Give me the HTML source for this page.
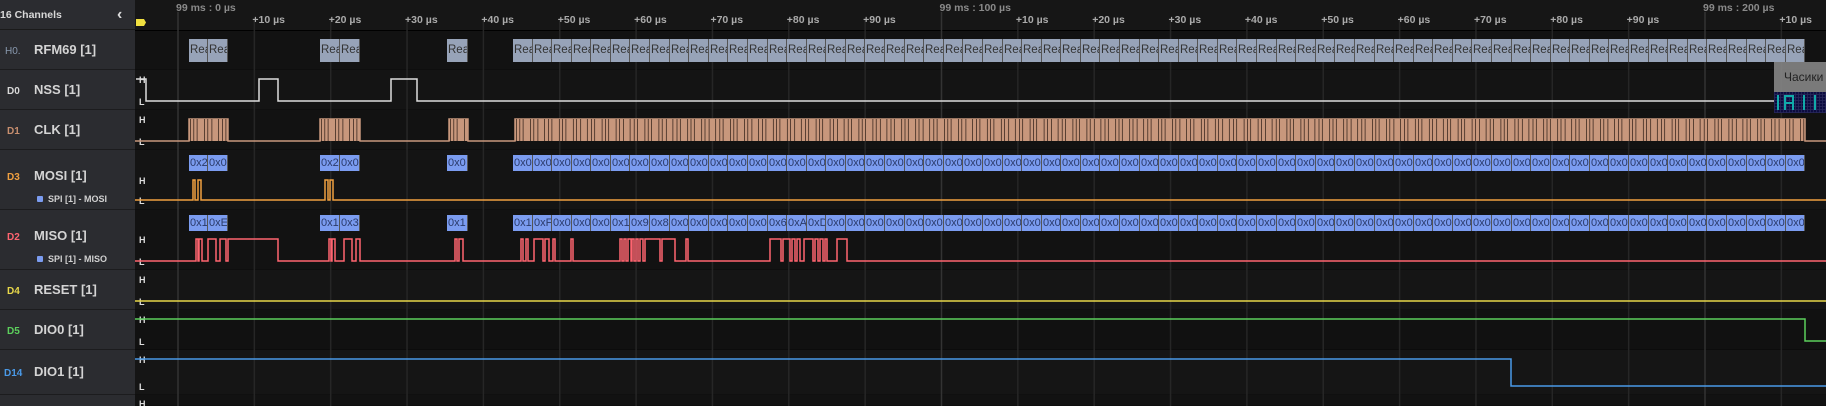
<!DOCTYPE html>
<html><head><meta charset="utf-8"><style>
*{margin:0;padding:0;box-sizing:border-box}
body{width:1826px;height:406px;overflow:hidden;background:#121212;font-family:"Liberation Sans","Noto Sans CJK SC",sans-serif;position:relative}
#side{position:absolute;left:0;top:0;width:135px;height:406px;background:#2b2c30}
.hdr{position:absolute;left:0;top:0;width:135px;height:30px;background:#2b2c30;border-bottom:1px solid #1a1a1a;color:#d8d8d8;font-size:10.5px;font-weight:bold;line-height:30px}
.row{position:absolute;left:0;width:135px;border-bottom:1px solid #1c1c1e}
.id{position:absolute;left:7px;font-size:10px;font-weight:bold}
.nm{position:absolute;left:34px;font-size:13px;font-weight:bold;color:#d4d4d4}
.sub{position:absolute;left:37px;font-size:9px;color:#d0d0d0;font-weight:bold}
.sub i{display:inline-block;width:6px;height:6px;background:#7b9cf0;border-radius:1px;margin-right:5px;vertical-align:0}
.blk{position:absolute;overflow:hidden;white-space:nowrap;font-size:11px;line-height:17px;padding-left:1px;border-right:1px solid #555}
.g{background:#97a3b8;color:#333;height:23px;line-height:23px;font-size:11.5px}
.b{background:#7b9cf0;color:#2a3a6a;height:16px;line-height:16px}
.tk{position:absolute;top:14px;font-size:10.5px;font-weight:bold;color:#aaa}
.mj{position:absolute;top:2px;font-size:10.5px;font-weight:bold;color:#8a8a8a}
</style></head><body>
<div id="side">
<div class="hdr">16 Channels<span style="position:absolute;left:117px;top:0;font-size:16px;color:#ddd">&#8249;</span></div>
<div class="row" style="top:30px;height:40px"><span class="id" style="top:16px;left:5px;color:#8a9ab0;font-weight:normal">H0.</span><span class="nm" style="top:12px">RFM69 [1]</span></div>
<div class="row" style="top:70px;height:40px"><span class="id" style="top:16px;color:#d8d8d8">D0</span><span class="nm" style="top:12px">NSS [1]</span></div>
<div class="row" style="top:110px;height:40px"><span class="id" style="top:16px;color:#c88f6f">D1</span><span class="nm" style="top:12px">CLK [1]</span></div>
<div class="row" style="top:150px;height:60px"><span class="id" style="top:22px;color:#f0a040">D3</span><span class="nm" style="top:18px">MOSI [1]</span><span class="sub" style="top:44px"><i></i>SPI [1] - MOSI</span></div>
<div class="row" style="top:210px;height:60px"><span class="id" style="top:22px;color:#ff6470">D2</span><span class="nm" style="top:18px">MISO [1]</span><span class="sub" style="top:44px"><i></i>SPI [1] - MISO</span></div>
<div class="row" style="top:270px;height:40px"><span class="id" style="top:16px;color:#e8d84a">D4</span><span class="nm" style="top:12px">RESET [1]</span></div>
<div class="row" style="top:310px;height:40px"><span class="id" style="top:16px;color:#5cd05c">D5</span><span class="nm" style="top:12px">DIO0 [1]</span></div>
<div class="row" style="top:350px;height:45px"><span class="id" style="top:18px;left:4px;color:#4a9ae8">D14</span><span class="nm" style="top:14px">DIO1 [1]</span></div>
</div>
<svg id="sv" style="position:absolute;left:0;top:0" width="1826" height="406"></svg>
<div id="ov"></div>
<div style="position:absolute;left:1774px;top:62px;width:52px;height:30px;background:rgba(140,140,140,0.85);color:#222;font-size:12px;padding:8px 0 0 10px">Часики</div>
<div style="position:absolute;left:1774px;top:92px;width:52px;height:21px;background:#0c0c40;background-image:linear-gradient(90deg,rgba(40,40,90,.8) 1px,transparent 1px),linear-gradient(0deg,rgba(40,40,90,.8) 1px,transparent 1px);background-size:3px 3px">
<div style="position:absolute;left:3px;top:3px;width:2px;height:15px;background:#1aa"></div>
<div style="position:absolute;left:10px;top:3px;width:2px;height:15px;background:#1aa"></div>
<div style="position:absolute;left:10px;top:3px;width:9px;height:2px;background:#1aa"></div>
<div style="position:absolute;left:18px;top:3px;width:2px;height:15px;background:#1aa"></div>
<div style="position:absolute;left:10px;top:10px;width:9px;height:2px;background:#1aa"></div>
<div style="position:absolute;left:29px;top:3px;width:2px;height:15px;background:#1aa"></div>
<div style="position:absolute;left:40px;top:3px;width:2px;height:15px;background:#1aa"></div>
</div>
<script>
var s='',ov='';
var rows=[[30,70,'#121212'],[70,110,'#141414'],[110,150,'#121212'],[150,210,'#141414'],[210,270,'#121212'],[270,310,'#151515'],[310,350,'#111'],[350,395,'#151515'],[395,406,'#121212']];
s+='<rect x="135" y="0" width="1691" height="30" fill="#161616"/>';
rows.forEach(r=>{s+='<rect x="135" y="'+r[0]+'" width="1691" height="'+(r[1]-r[0])+'" fill="'+r[2]+'"/><line x1="135" x2="1826" y1="'+r[1]+'.5" y2="'+r[1]+'.5" stroke="#000" stroke-width="1.5"/>';});
s+='<line x1="135" x2="1826" y1="30.5" y2="30.5" stroke="#000"/>';
var px=7.635;
for(var k=0;k<22;k++){var x=178+k*px*10;if(x>1826)break;var maj=(k%10==0);
s+='<line x1="'+x+'" x2="'+x+'" y1="'+(maj?12:18)+'" y2="406" stroke="'+(maj?'#333':'#262626')+'" stroke-width="1.5"/>';
if(maj){ov+='<div class="mj" style="left:'+(x-2)+'px">99 ms : '+(k*10)+' µs</div>';}
else ov+='<div class="tk" style="left:'+(x-2)+'px">+'+((k%10)*10)+' µs</div>';}
s+='<path d="M136 19h8l2 3.5l-2 3.5h-8z" fill="#f0e040"/>';
function HL(h,l){s+='<text x="139" y="'+(h+4)+'" fill="#ddd" font-size="9" font-weight="bold" font-family="Liberation Sans">H</text><text x="139" y="'+(l+4)+'" fill="#ddd" font-size="9" font-weight="bold" font-family="Liberation Sans">L</text>';}
HL(79,101);HL(119,141);HL(180,200);HL(239,261);HL(279,301);HL(319,341);HL(359,386);
s+='<text x="139" y="407" fill="#ddd" font-size="9" font-weight="bold" font-family="Liberation Sans">H</text>';
function wave(h,l,hi,col,start,end,init){var d='M'+start+' '+(init?h:l);
hi.forEach(p=>{d+='H'+p[0]+'V'+h+'H'+p[1]+'V'+l;});d+='H'+end;s+='<path d="'+d+'" fill="none" stroke="'+col+'" stroke-width="1.5"/>';}
s+='<path d="M136 79H146V101H259V79H278V101H391V79H417V101H1826" fill="none" stroke="#ddd" stroke-width="1.5"/>';
var bursts=[[189,228],[320,360],[449,468],[515,1805]];
var d='M135 141';bursts.forEach(b=>{d+='H'+b[0]+'V119H'+b[1]+'V141';});d+='H1826';
s+='<path d="'+d+'" fill="none" stroke="#c8977c" stroke-width="1.5"/>';
bursts.forEach(b=>{s+='<rect x="'+b[0]+'" y="119" width="'+(b[1]-b[0])+'" height="22" fill="#c8977c"/>';
for(var x=b[0]+1.5,i=0;x<b[1]-1;x+=(i%3==2?4.1:3.3),i++){if(i%4!=3)s+='<line x1="'+x.toFixed(1)+'" x2="'+x.toFixed(1)+'" y1="119" y2="141" stroke="#2a1a14" stroke-width="0.7"/>';}});
wave(180,200,[[193,195],[198,201],[325,328],[330,333]],'#f0a040',135,1826,false);
wave(239,261,[[196,198],[199,202],[208,216],[220,226],[228,278],[329,331],[332,335],[344,352],[356,360],[455,457],[459,463],[521,523],[526,528],[534,543],[545,549],[553,555],[571,573],[620,622],[624,626],[628,631],[632,634],[636,638],[640,643],[645,660],[662,675],[686,688],[770,781],[783,790],[792,795],[797,800],[804,813],[815,818],[820,823],[825,827],[837,847]],'#ff6470',135,1826,false);
s+='<line x1="135" x2="1826" y1="301" y2="301" stroke="#e8d84a" stroke-width="1.5"/>';
s+='<path d="M135 319H1805V341H1826" fill="none" stroke="#5cd05c" stroke-width="1.5"/>';
s+='<path d="M135 359H1511V386H1826" fill="none" stroke="#4a9ae8" stroke-width="1.5"/>';
document.getElementById('sv').innerHTML=s;
function blocks(xs,y,cls,labels){xs.forEach((x,i)=>{ov+='<div class="blk '+cls+'" style="left:'+x[0]+'px;top:'+y+'px;width:'+(x[1]-x[0])+'px">'+labels[i]+'</div>';});}
var g=[[189,208],[208,228],[320,340],[340,360],[447,468]];
for(var i=0;i<66;i++){var a=513+i*19.58;g.push([Math.round(a),Math.round(a+19.58)]);}
var L=g.map(()=>'Rea');blocks(g,39,'g',L);
var mo=g.map((x,i)=>i==0||i==2?'0x20':'0x0');blocks(g,155,'b',mo);
var mi=['0x1','0xE','0x1','0x3','0x1'].concat(['0x1','0xF','0x0','0x0','0x0','0x1','0x9','0x8','0x0','0x0','0x0','0x0','0x0','0x6','0xA','0xD']);
while(mi.length<g.length)mi.push('0x0');blocks(g,215,'b',mi);
document.getElementById('ov').innerHTML=ov;
</script>
</body></html>
